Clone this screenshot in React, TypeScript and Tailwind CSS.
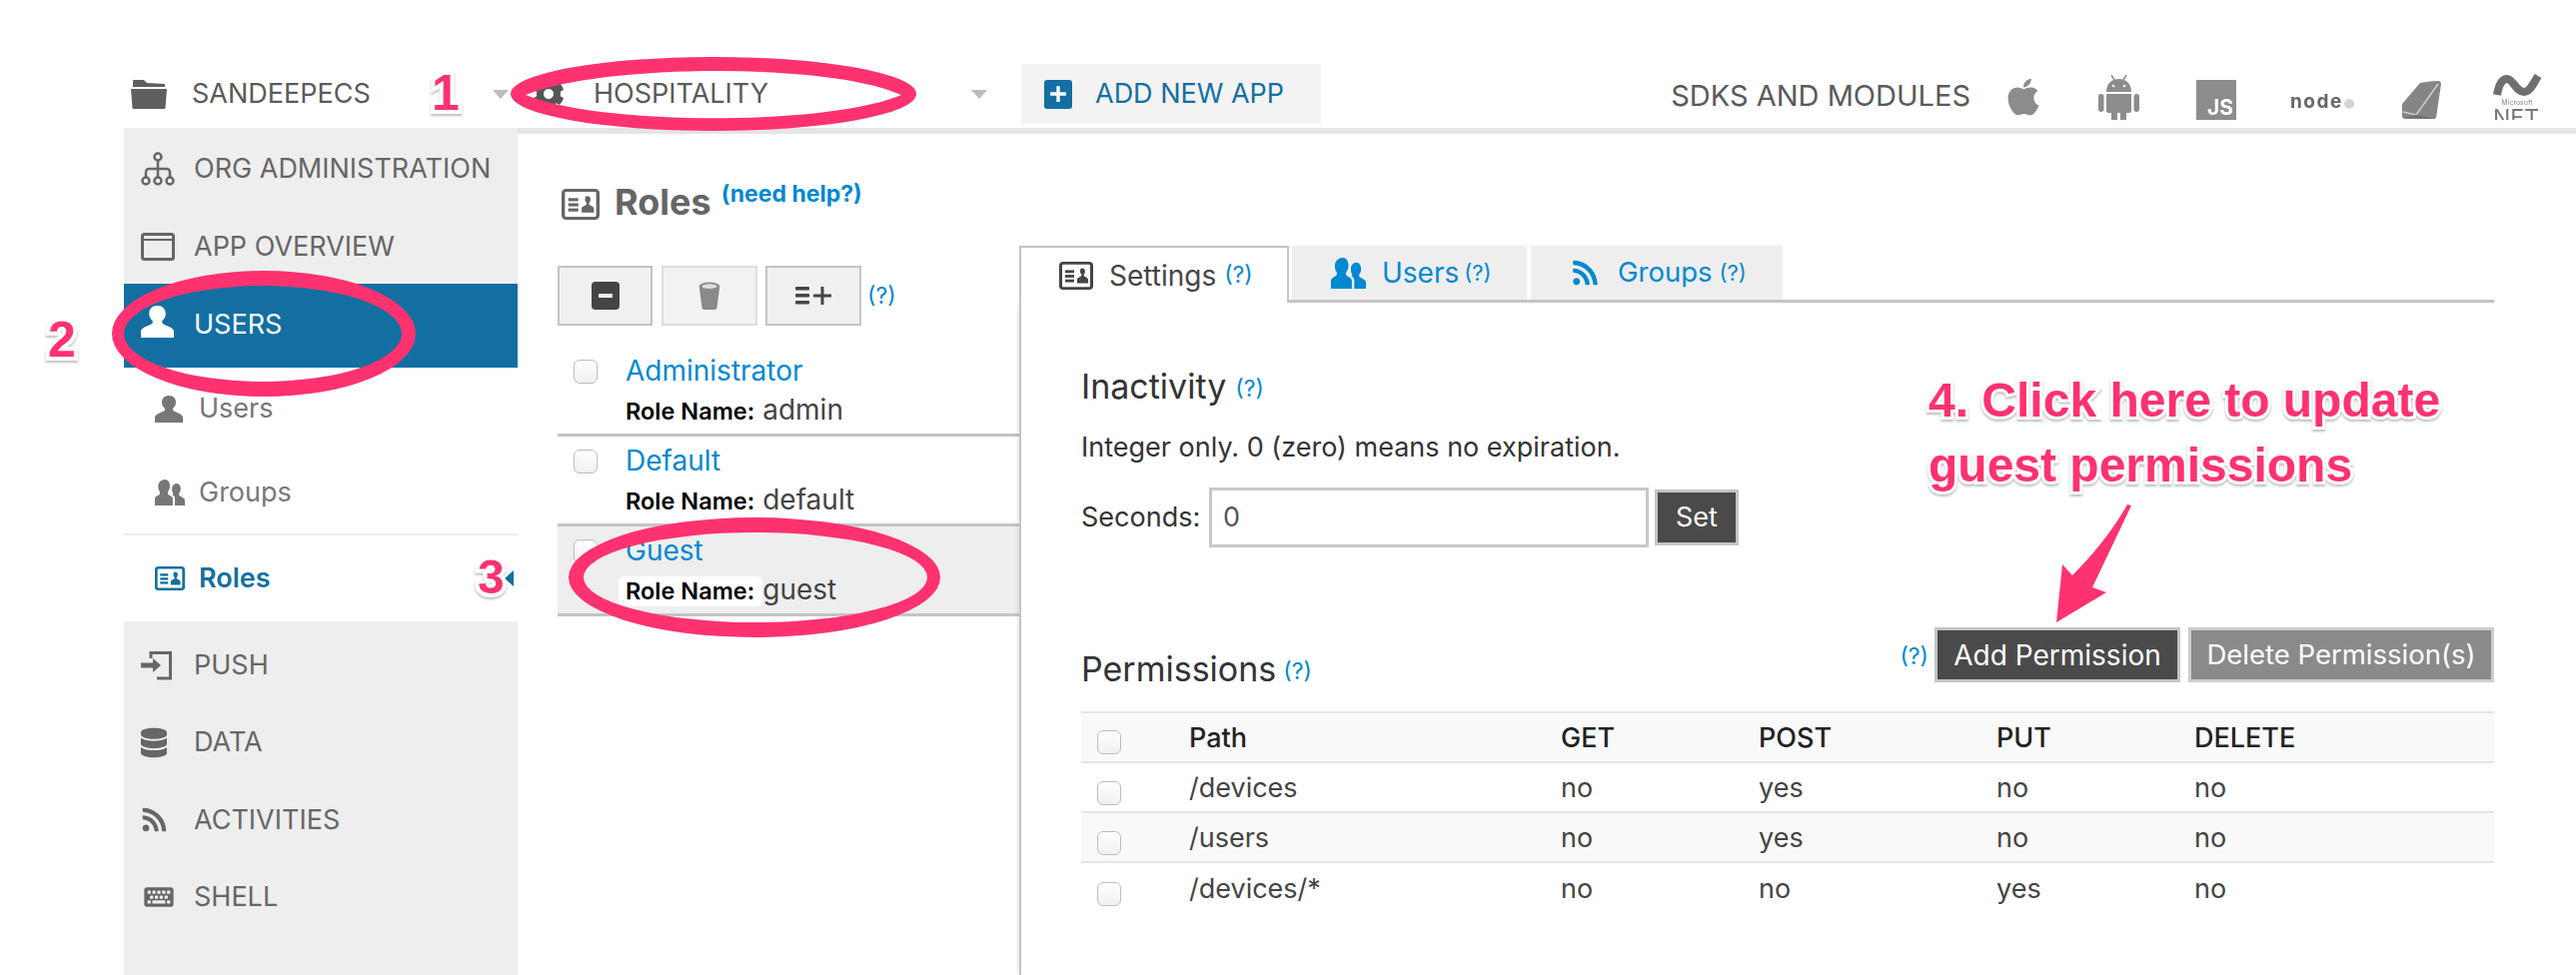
import React from "react";
import { FaApple, FaRss, FaDatabase, FaKeyboard, FaCog } from "react-icons/fa";

const PERSON =
  "M12 0c4 0 6 3.5 6 8 0 3-1 5.5-2.5 7v2.5c0 1.5 8.5 4 8.5 8V32H0v-6.500c0-4 8.500-6.500 8.500-8V15C7 13.500 6 11 6 8c0-4.500 2-8 6-8z";

function Person({ className }: { className?: string }) {
  return (
    <svg viewBox="0 0 24 32" className={className} fill="currentColor" preserveAspectRatio="none">
      <path d={PERSON} />
    </svg>
  );
}

function People({ className }: { className?: string }) {
  return (
    <svg viewBox="0 0 36 32" className={className} fill="currentColor" preserveAspectRatio="none">
      <path d="M12 0c4 0 6 3.500 6 8 0 3-1 5.500-2.500 7v2.500c0 1.500 6 3 6 6V32H0v-8.500c0-3 6-4.500 6-6V15C4.500 13.500 4 11 4 8c0-4.500 4-8 8-8z" />
      <path d="M26 5c3 0 5 3 5 6.500 0 2.500-1 4.500-2 5.500v2c0 1.500 7 3 7 6.500V32H24v-9c0-2-2-3.500-3-4.500 1-.5 1-1 1-1.500-1-1-1.500-3-1.500-5.500C20.500 8 23 5 26 5z" />
    </svg>
  );
}

function IdCard({ className }: { className?: string }) {
  return (
    <svg viewBox="0 0 34 30" className={className} preserveAspectRatio="none">
      <rect x="1.500" y="1.500" width="31" height="27" rx="2.500" fill="none" stroke="currentColor" strokeWidth="3" />
      <rect x="6" y="9" width="9" height="3" fill="currentColor" />
      <rect x="6" y="14" width="9" height="3" fill="currentColor" />
      <rect x="6" y="19" width="9" height="3" fill="currentColor" />
      <path d="M23 7c2 0 3 1.500 3 3.500 0 1.500-.8 2.500-1.300 3v1.500c0 1 4.300 2 4.300 4V23H18v-4c0-2 4.300-3 4.300-4v-1.500c-.5-.5-1.300-1.500-1.300-3C21 8.500 21 7 23 7z" fill="currentColor" />
    </svg>
  );
}

function Help({ className }: { className: string }) {
  return <span className={className}>(?)</span>;
}

function Check({ className }: { className?: string }) {
  return (
    <span
      className={`block w-[24px] h-[24px] shrink-0 rounded-[6px] border border-[#bdbdbd] bg-gradient-to-b from-white to-[#f0f0f0] ${className ?? ""}`}
    />
  );
}

function TopNav({ icon, label, tall }: { icon: React.ReactNode; label: string; tall?: boolean }) {
  return (
    <div className={`flex items-center ${tall ? "h-[78px]" : "h-[77.5px]"}`}>
      <span className="w-[70px] pl-[17px] flex items-center text-[#666]">{icon}</span>
      <span className="text-[27px] text-[#666]">{label}</span>
    </div>
  );
}

function RoleRow({ title, name, active }: { title: string; name: string; active?: boolean }) {
  return (
    <div className={`flex h-[90px] border-b-[3px] border-[#c4c4c4] pl-[16px] ${active ? "bg-[#eeeeee]" : ""}`}>
      <Check className="mt-[13px]" />
      <div className="ml-[28px]">
        <div className="h-[48px] leading-[48px] text-[28px] text-[#0088d2]">{title}</div>
        <div className="h-[30px] leading-[30px] whitespace-nowrap">
          <span className={`inline-block -ml-[7px] pl-[7px] pr-[8px] rounded-[6px] text-[23.500px] font-semibold text-black ${active ? "bg-white" : ""}`}>
            Role Name:
          </span>
          <span className="text-[28px] text-[#444]">{name}</span>
        </div>
      </div>
    </div>
  );
}

const COLS = "grid grid-cols-[108px_372px_198px_238px_198px_300px] items-center h-[50px] pt-[2px]";

function PermRow({ v, shaded, last }: { v: string[]; shaded?: boolean; last?: boolean }) {
  return (
    <div className={`${COLS} ${shaded ? "bg-[#f9f9f9]" : ""} ${last ? "" : "border-b-2 border-[#e5e5e5]"} text-[27px] text-[#444]`}>
      <Check className="ml-[16px] mt-[10px]" />
      {v.map((t, i) => (
        <span key={i}>{t}</span>
      ))}
    </div>
  );
}

export default function App() {
  return (
    <div className="relative w-[2578px] h-[976px] overflow-hidden bg-white font-['Inter',sans-serif]">
      {/* Header */}
      <header className="h-[128px] pt-[64px] pl-[131px] flex items-start">
        <div className="h-[60px] flex items-center w-[61px] text-[#5f5f5f]">
          <svg viewBox="0 0 36 29" className="w-[36px] h-[29px]" fill="currentColor">
            <path d="M3 0h10l3 3 18 1v3H2V1a1 1 0 0 1 1-1zM0 9h36l-1.500 19a1 1 0 0 1-1 1H2.500a1 1 0 0 1-1-1z" />
          </svg>
        </div>
        <div className="h-[60px] leading-[60px] w-[301px] text-[27px] text-[#5a5a5a]">SANDEEPECS</div>
        <div className="h-[60px] w-[32px] flex items-center">
          <span className="block w-0 h-0 border-x-[8px] border-x-transparent border-t-[9px] border-t-[#bbbbbb]" />
        </div>
        <div className="h-[60px] w-[69px] flex items-center pl-[8px] text-[#555]">
          <FaCog className="w-[32px] h-[32px]" />
        </div>
        <div className="h-[60px] leading-[60px] w-[378px] text-[27px] text-[#5a5a5a]">HOSPITALITY</div>
        <div className="h-[60px] w-[50px] flex items-center">
          <span className="block w-0 h-0 border-x-[8px] border-x-transparent border-t-[9px] border-t-[#bbbbbb]" />
        </div>
        <div className="h-[60px] w-[300px] bg-[#f3f3f3] flex items-center pl-[23px]">
          <span className="w-[28px] h-[29px] rounded-[3px] bg-[#136fa1] flex items-center justify-center">
            <svg viewBox="0 0 16 16" className="w-[18px] h-[18px]">
              <path d="M6.500 1h3v5.500H15v3H9.500V15h-3V9.500H1v-3h5.500z" fill="white" />
            </svg>
          </span>
          <span className="ml-[23px] text-[27px] text-[#136fa1]">ADD NEW APP</span>
        </div>
        <div className="h-[60px] ml-auto leading-[64px] text-[29px] text-[#5a5a5a] whitespace-nowrap">SDKS AND MODULES</div>
        <div className="ml-[34px] mr-[35px] flex items-start text-[#8c8c8c] blur-[0.5px]">
          <FaApple className="mt-[12px] w-[38px] h-[42px]" />
          <svg viewBox="0 0 41 45" className="mt-[11px] ml-[56px] w-[41px] h-[45px]" fill="currentColor">
            <path d="M13 0l3 5M28 0l-3 5" stroke="currentColor" strokeWidth="1.500" fill="none" />
            <path d="M8 17C8 9 13 4 20.500 4S33 9 33 17z" />
            <path d="M8 19h25v17a2 2 0 0 1-2 2h-3v7h-6v-7h-3v7h-6v-7h-3a2 2 0 0 1-2-2z" />
            <rect x="0" y="19" width="5.500" height="18" rx="2.700" />
            <rect x="35.500" y="19" width="5.500" height="18" rx="2.700" />
            <circle cx="15" cy="11" r="1.300" fill="white" />
            <circle cx="26" cy="11" r="1.300" fill="white" />
          </svg>
          <div className="mt-[16px] ml-[57px] w-[40px] h-[40px] bg-[#8c8c8c] flex items-end justify-end pr-[3px] text-[21px] leading-[24px] font-bold text-white">
            JS
          </div>
          <div className="mt-[27px] ml-[54px] w-[64px] flex items-center text-[19px] leading-[22px] font-bold text-[#666] tracking-[1.500px]">
            node
            <span className="block shrink-0 w-[10px] h-[10px] mt-[3px] ml-[1px] rounded-full bg-[#d4d4d4]" />
          </div>
          <svg viewBox="0 0 40 39" className="mt-[17px] ml-[47px] w-[40px] h-[39px]">
            <path d="M19 2Q28 0 38 0q2 1 2 3L35 37q-1 1-3 1L4 38q-3 0-3-3V23z" fill="#858585" />
            <path d="M2 31l13 3L37 3" fill="none" stroke="#cfcfcf" strokeWidth="1.500" />
            <path d="M3 37l12-3 20 4z" fill="#707070" />
          </svg>
          <svg viewBox="0 0 48 46" className="mt-[10px] ml-[52px] w-[48px] h-[46px] overflow-hidden">
            <path d="M4 21C6 9 10 5 14 5c6 0 9 13 17 13 6 0 9-8 14-16" fill="none" stroke="#6f6f6f" strokeWidth="8" />
            <text x="24" y="31" fontSize="7" textAnchor="middle" fill="#888">Microsoft</text>
            <text x="23" y="52" fontSize="23" textAnchor="middle" fill="#777">NET</text>
          </svg>
        </div>
      </header>

      {/* Body */}
      <div className="flex h-[848px]">
        <aside className="ml-[124px] w-[394px] shrink-0 flex flex-col">
          <div className="bg-[#eeeeee] h-[156px] pt-[2px]">
            <TopNav
              tall
              label="ORG ADMINISTRATION"
              icon={
                <svg viewBox="0 0 34 34" className="w-[34px] h-[34px]" fill="none" stroke="currentColor" strokeWidth="2.500">
                  <circle cx="17" cy="5" r="3.500" />
                  <path d="M17 9v16M5 25v-5a3 3 0 0 1 3-3h18a3 3 0 0 1 3 3v5" />
                  <circle cx="5" cy="29" r="3.500" />
                  <circle cx="17" cy="29" r="3.500" />
                  <circle cx="29" cy="29" r="3.500" />
                </svg>
              }
            />
            <TopNav
              tall
              label="APP OVERVIEW"
              icon={
                <svg viewBox="0 0 34 28" className="w-[34px] h-[28px]" fill="none" stroke="currentColor">
                  <rect x="1.500" y="1.500" width="31" height="25" rx="2" strokeWidth="3" />
                  <path d="M2 7h30" strokeWidth="2" />
                </svg>
              }
            />
          </div>
          <div className="h-[84px] bg-[#136fa1] flex items-start">
            <span className="w-[70px] pl-[17px] pt-[22px] text-white">
              <Person className="w-[33px] h-[32px]" />
            </span>
            <span className="text-[27px] leading-[82px] text-white">USERS</span>
          </div>
          <div className="h-[82px] flex items-center">
            <span className="w-[75px] pl-[31px] text-[#777]"><Person className="w-[28px] h-[27px]" /></span>
            <span className="text-[27px] text-[#777]">Users</span>
          </div>
          <div className="h-[86px] pt-[2px] flex items-center border-b-2 border-[#eeeeee]">
            <span className="w-[75px] pl-[31px] text-[#777]"><People className="w-[30px] h-[26px]" /></span>
            <span className="text-[27px] text-[#777]">Groups</span>
          </div>
          <div className="h-[86px] flex items-center">
            <span className="w-[75px] pl-[31px] text-[#136fa1]"><IdCard className="w-[30px] h-[24px]" /></span>
            <span className="text-[27px] font-semibold text-[#136fa1]">Roles</span>
            <span className="block ml-auto mr-[4px] w-0 h-0 border-y-[8px] border-y-transparent border-r-[9px] border-r-[#136fa1]" />
          </div>
          <div className="flex-1 bg-[#eeeeee] pt-[5px]">
            <TopNav
              label="PUSH"
              icon={
                <svg viewBox="0 0 32 30" className="w-[32px] h-[30px]" fill="none" stroke="currentColor" strokeWidth="3">
                  <path d="M10 8V2.500h19.500v25.500H16" />
                  <path d="M0 15h13" strokeWidth="5" />
                  <path d="M12 8l8 7-8 7z" fill="currentColor" strokeWidth="0" />
                </svg>
              }
            />
            <TopNav label="DATA" icon={<FaDatabase className="w-[26px] h-[31px]" />} />
            <TopNav label="ACTIVITIES" icon={<FaRss className="w-[27px] h-[27px]" />} />
            <TopNav label="SHELL" icon={<FaKeyboard className="w-[36px] h-[26px]" />} />
          </div>
        </aside>

        <main className="flex-1 border-t-[6px] border-[#e5e5e5] pl-[40px] pr-[82px] min-w-0">
          <div className="h-[112px] pt-[48px] flex items-start pl-[4px] text-[#666]">
            <IdCard className="mt-[7px] w-[38px] h-[31px]" />
            <span className="ml-[15px] text-[36px] leading-[40px] font-bold">Roles</span>
            <span className="ml-[10px] -mt-[2px] text-[23px] font-bold leading-[28px] text-[#0088d2]">(need help?)</span>
          </div>
          <div className="flex">
            <div className="w-[462px] pt-[20px] shrink-0">
              <div className="flex items-center h-[60px]">
                <button className="w-[95px] h-[60px] border-2 border-[#c4c4c4] bg-[#f0f0f0] flex items-center justify-center">
                  <svg viewBox="0 0 28 28" className="w-[28px] h-[28px]">
                    <rect width="28" height="28" rx="4" fill="#444" />
                    <rect x="7" y="12" width="14" height="4" fill="#eee" />
                  </svg>
                </button>
                <button className="ml-[9px] w-[96px] h-[60px] border-2 border-[#dddddd] bg-[#f2f2f2] flex items-center justify-center">
                  <svg viewBox="0 0 24 30" className="w-[24px] h-[28px]">
                    <path d="M1 5h22l-3 23c0 1-2 2-3 2H7c-1 0-3-1-3-2z" fill="#8a8a8a" />
                    <ellipse cx="12" cy="5" rx="11" ry="4.500" fill="#8a8a8a" />
                    <ellipse cx="12" cy="5" rx="8" ry="2.500" fill="#dddddd" />
                  </svg>
                </button>
                <button className="ml-[8px] w-[96px] h-[60px] border-2 border-[#c4c4c4] bg-[#f0f0f0] flex items-center justify-center">
                  <svg viewBox="0 0 36 18" className="w-[36px] h-[18px]" fill="#444">
                    <rect x="0" y="0" width="14" height="3.500" rx="1" />
                    <rect x="0" y="7" width="14" height="3.500" rx="1" />
                    <rect x="0" y="14" width="14" height="3.500" rx="1" />
                    <rect x="18" y="7.500" width="18" height="3" />
                    <rect x="25.500" y="0" width="3" height="18" />
                  </svg>
                </button>
                <Help className="ml-[6px] text-[23px] text-[#0088d2]" />
              </div>
              <div className="mt-[21px]">
                <RoleRow title="Administrator" name="admin" />
                <RoleRow title="Default" name="default" />
                <RoleRow title="Guest" name="guest" active />
              </div>
            </div>

            <div className="flex-1 min-w-0">
              <div className="flex h-[57px] items-end">
                <div className="w-[270px] h-[57px] border-2 border-b-0 border-[#c4c4c4] bg-white flex items-center pl-[38px] text-[#444]">
                  <IdCard className="w-[34px] h-[28px]" />
                  <span className="ml-[16px] text-[28px]">Settings</span>
                  <Help className="ml-[8px] text-[23px] text-[#0088d2]" />
                </div>
                <div className="flex-1 h-[57px] border-b-[3px] border-[#c4c4c4] flex items-stretch pl-[3px]">
                  <div className="w-[235px] bg-[#eeeeee] flex items-center pl-[39px] text-[#0088d2]">
                    <People className="w-[35px] h-[31px]" />
                    <span className="ml-[16px] text-[28px]">Users</span>
                    <Help className="ml-[5px] text-[22px]" />
                  </div>
                  <div className="ml-[4px] w-[252px] bg-[#eeeeee] flex items-center pl-[41px] text-[#0088d2]">
                    <FaRss className="w-[27px] h-[28px]" />
                    <span className="ml-[19px] text-[27.500px]">Groups</span>
                    <Help className="ml-[7px] text-[22px]" />
                  </div>
                </div>
              </div>

              <div className="border-l-2 border-[#c4c4c4] pl-[60px] pt-[63px] h-[673px] shadow-[-2px_0_3px_rgba(0,0,0,0.08)]">
                <div className="h-[40px] flex items-center text-[#333]">
                  <span className="text-[34px]">Inactivity</span>
                  <Help className="ml-[9px] mt-[6px] text-[23px] text-[#0088d2]" />
                </div>
                <div className="mt-[24px] h-[36px] leading-[36px] text-[27px] text-[#333] whitespace-nowrap">
                  Integer only. 0 (zero) means no expiration.
                </div>
                <div className="mt-[22px] h-[60px] flex items-center">
                  <span className="w-[128px] text-[27px] text-[#333] whitespace-nowrap">Seconds:</span>
                  <div className="w-[440px] h-[60px] border-[3px] border-[#c8c8c8] pl-[11px] flex items-center text-[27px] text-[#555]">0</div>
                  <button className="ml-[6px] w-[84px] h-[56px] bg-[#4a4a4a] border-[3px] border-[#c4c4c4] text-white text-[27px]">Set</button>
                </div>
                <div className="mt-[80px] h-[63px] flex items-start">
                  <div className="mt-[21px] h-[40px] flex items-center text-[#333]">
                    <span className="text-[34px]">Permissions</span>
                    <Help className="ml-[7px] mt-[6px] text-[23px] text-[#0088d2]" />
                  </div>
                  <Help className="ml-auto mt-[12px] text-[23px] text-[#0088d2]" />
                  <button className="ml-[6px] w-[246px] h-[55px] pt-[1px] bg-[#4a4a4a] border-[3px] border-[#c4c4c4] text-white text-[28px] whitespace-nowrap">Add Permission</button>
                  <button className="ml-[8px] w-[306px] h-[55px] pt-[1px] bg-[#8a8a8a] border-[3px] border-[#cccccc] text-white text-[27.500px] whitespace-nowrap">Delete Permission(s)</button>
                </div>
                <div className="mt-[21px] border-t-2 border-[#e5e5e5]">
                  <div className={`${COLS} bg-[#f9f9f9] border-b-2 border-[#e5e5e5] text-[27px] font-medium text-[#222]`}>
                    <Check className="ml-[16px] mt-[8px]" />
                    <span>Path</span>
                    <span>GET</span>
                    <span>POST</span>
                    <span>PUT</span>
                    <span>DELETE</span>
                  </div>
                  <PermRow v={["/devices", "no", "yes", "no", "no"]} />
                  <PermRow v={["/users", "no", "yes", "no", "no"]} shaded />
                  <PermRow v={["/devices/*", "no", "no", "yes", "no"]} last />
                </div>
              </div>
            </div>
          </div>
        </main>
      </div>

      {/* Annotations drawn over the page */}
      <svg className="absolute inset-0 pointer-events-none" width="2578" height="976" viewBox="0 0 2578 976">
        <path
          fillRule="evenodd"
          fill="#ff3270"
          d="M511 94a203 37 0 1 0 406 0a203 37 0 1 0 -406 0zM526 95C600 64 830 62 902 95C830 126 600 126 526 95z"
        />
        <path
          fillRule="evenodd"
          fill="#ff3270"
          d="M112 334a152 63 0 1 0 304 0a152 63 0 1 0 -304 0zM124 334a139 48 0 1 0 278 0a139 48 0 1 0 -278 0z"
        />
        <path
          fillRule="evenodd"
          fill="#ff3270"
          d="M569 578a186 60 0 1 0 372 0a186 60 0 1 0 -372 0zM584 578a172 45 0 1 0 344 0a172 45 0 1 0 -344 0z"
        />
        <path
          fill="#ff3270"
          d="M2133 506L2094 588L2108 593L2058 623L2064 565L2074 576C2095 555 2115 530 2129 505z"
        />
      </svg>
      <div className="absolute left-[432px] top-[61px] text-[50px] leading-[64px] font-bold font-['Liberation_Sans',sans-serif] text-[#ff3270] [-webkit-text-stroke:8px_white] [paint-order:stroke_fill] drop-shadow-[0_2px_1px_rgba(0,0,0,0.25)]">1</div>
      <div className="absolute left-[48px] top-[308px] text-[50px] leading-[64px] font-bold font-['Liberation_Sans',sans-serif] text-[#ff3270] [-webkit-text-stroke:8px_white] [paint-order:stroke_fill] drop-shadow-[0_2px_1px_rgba(0,0,0,0.25)]">2</div>
      <div className="absolute left-[478px] top-[546px] text-[48px] leading-[64px] font-bold font-['Liberation_Sans',sans-serif] text-[#ff3270] [-webkit-text-stroke:8px_white] [paint-order:stroke_fill] drop-shadow-[0_2px_1px_rgba(0,0,0,0.25)]">3</div>
      <div className="absolute left-[1930px] top-[368px] text-[48px] leading-[65px] font-bold font-['Liberation_Sans',sans-serif] text-[#ff3270] [-webkit-text-stroke:6px_white] [paint-order:stroke_fill] drop-shadow-[0_2px_1px_rgba(0,0,0,0.25)] whitespace-nowrap">
        4. Click here to update
        <br />
        guest permissions
      </div>
    </div>
  );
}
